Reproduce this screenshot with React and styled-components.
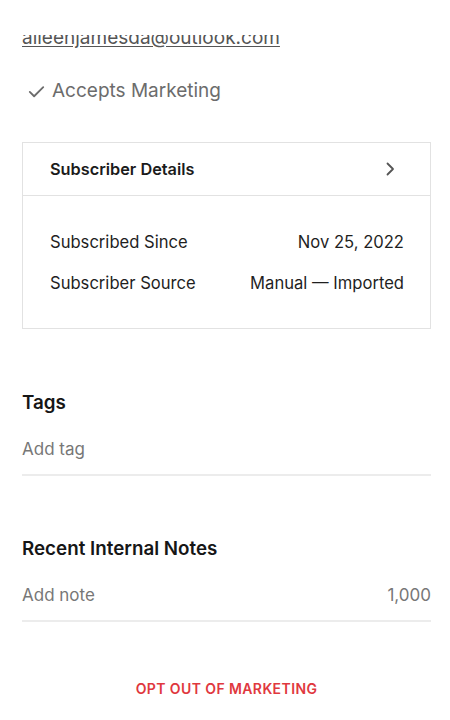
import React from "react";
import styled, { createGlobalStyle } from "styled-components";

const GlobalStyle = createGlobalStyle`
  html, body {
    margin: 0;
    padding: 0;
    background: #fff;
  }
  body {
    font-family: Inter, "Liberation Sans", sans-serif;
    color: #1b1b1b;
    -webkit-font-smoothing: antialiased;
  }
`;

// the page is scrolled: the email line sits partly under the top edge
const Viewport = styled.div`
  margin-top: 35px;
  height: 685px;
  overflow: hidden;
`;

const Page = styled.div`
  margin-top: -9px;
  padding: 0 19px 0 22px;
`;

const Email = styled.a`
  display: block;
  font-size: 19px;
  line-height: 24px;
  color: #555;
  text-decoration: underline;
  text-underline-offset: 2px;
`;

const Marketing = styled.div`
  display: flex;
  align-items: center;
  gap: 6px;
  margin-top: 29px;
  padding-left: 5px;
  font-size: 19px;
  line-height: 24px;
  color: #6c6c6c;
`;

const Card = styled.section`
  margin-top: 39px;
  border: 1px solid #e2e2e2;
`;

const CardHeader = styled.div`
  display: flex;
  align-items: center;
  justify-content: space-between;
  height: 52px;
  padding: 0 34px 0 27px;
  border-bottom: 1px solid #e2e2e2;
  font-size: 16.3px;
  font-weight: 600;
`;

const CardBody = styled.div`
  display: flex;
  flex-direction: column;
  gap: 21px;
  padding: 36px 26px 35px 27px;
`;

const DetailRow = styled.div`
  display: flex;
  justify-content: space-between;
  font-size: 16.6px;
  line-height: 20px;
  color: #1f1f1f;
`;

const Section = styled.section`
  margin-top: ${(p) => p.$top}px;
`;

const Heading = styled.h2`
  margin: 0;
  font-size: 18.8px;
  font-weight: 600;
  line-height: 24px;
  color: #161616;
`;

const Field = styled.div`
  display: flex;
  justify-content: space-between;
  margin-top: 24px;
  padding-bottom: 15px;
  border-bottom: 2px solid #ececec;
  font-size: 17px;
  line-height: 20px;
  color: #777;
`;

const OptOut = styled.button`
  display: block;
  margin: 57px auto 0;
  padding: 0;
  border: 0;
  background: none;
  font-family: inherit;
  font-size: 14px;
  font-weight: 600;
  letter-spacing: 0.4px;
  line-height: 20px;
  color: #e0383e;
`;

const Check = () => (
  <svg width="19" height="19" viewBox="0 0 24 24" fill="none" stroke="#6c6c6c" strokeWidth="2.3" strokeLinecap="round" strokeLinejoin="round">
    <path d="M3.5 12.5l5.5 5.5L20.5 6.5" />
  </svg>
);

const Chevron = () => (
  <svg width="12" height="14" viewBox="0 0 12 14" fill="none" stroke="#555" strokeWidth="1.8" strokeLinecap="round" strokeLinejoin="round">
    <path d="M3.5 1.5L9 7l-5.5 5.5" />
  </svg>
);

const App = () => {
  return (
    <>
      <GlobalStyle />
      <Viewport>
        <Page>
          <Email>aileenjamesda@outlook.com</Email>
          <Marketing>
            <Check />
            Accepts Marketing
          </Marketing>

          <Card>
            <CardHeader>
              Subscriber Details
              <Chevron />
            </CardHeader>
            <CardBody>
              <DetailRow>
                <span>Subscribed Since</span>
                <span>Nov 25, 2022</span>
              </DetailRow>
              <DetailRow>
                <span>Subscriber Source</span>
                <span>Manual — Imported</span>
              </DetailRow>
            </CardBody>
          </Card>

          <Section $top={62}>
            <Heading>Tags</Heading>
            <Field>Add tag</Field>
          </Section>

          <Section $top={61}>
            <Heading>Recent Internal Notes</Heading>
            <Field>
              <span>Add note</span>
              <span>1,000</span>
            </Field>
          </Section>

          <OptOut>OPT OUT OF MARKETING</OptOut>
        </Page>
      </Viewport>
    </>
  );
};

export default App;
